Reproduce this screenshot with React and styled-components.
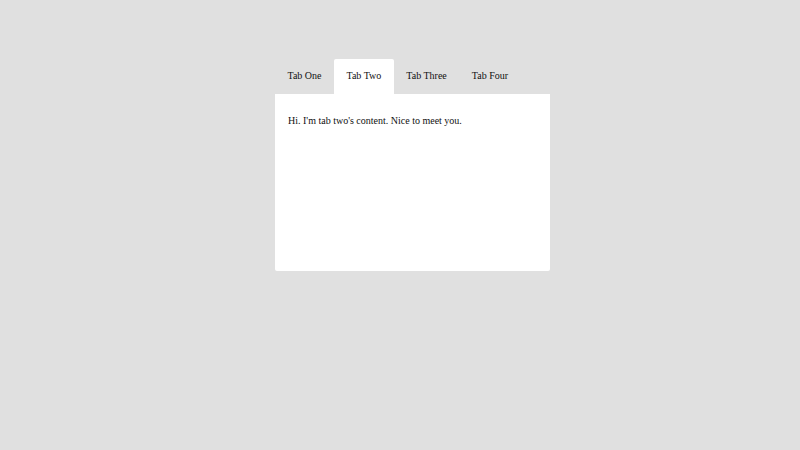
import React, { useState } from 'react'
import styled, { createGlobalStyle } from 'styled-components'

const GlobalStyle = createGlobalStyle`
  html, body {
    margin: 0;
    padding: 0;
    background: #e0e0e0;
    font-family: "Liberation Serif", "Times New Roman", serif;
    color: #111;
  }
`

const Page = styled.div`
  min-height: 450px;
  padding: 59px 0 0 275px;
  box-sizing: border-box;
`

const Tabs = styled.div`
  width: 275px;
`

const TabList = styled.div`
  display: flex;
`

const Tab = styled.button`
  flex: 0 0 auto;
  white-space: nowrap;
  border: none;
  margin: 0;
  height: 35px;
  padding: 0 12.5px 2px;
  font-family: inherit;
  font-size: 10px;
  color: #111;
  cursor: pointer;
  background: ${p => (p.$active ? '#fff' : 'transparent')};
  border-radius: 2px 2px 0 0;
`

const Panel = styled.div`
  background: #fff;
  height: 177px;
  box-sizing: border-box;
  padding: 21px 13px;
  border-radius: 0 0 2px 2px;
  font-size: 10px;
`

const Text = styled.p`
  margin: 0;
`

const tabs = [
  { label: 'Tab One', text: "Hi. I'm tab one's content. Nice to meet you." },
  { label: 'Tab Two', text: "Hi. I'm tab two's content. Nice to meet you." },
  { label: 'Tab Three', text: "Hi. I'm tab three's content. Nice to meet you." },
  { label: 'Tab Four', text: "Hi. I'm tab four's content. Nice to meet you." },
]

export default function App() {
  const [active, setActive] = useState(1)
  return (
    <>
      <GlobalStyle />
      <Page>
        <Tabs>
          <TabList>
            {tabs.map((t, i) => (
              <Tab key={t.label} $active={i === active} onClick={() => setActive(i)}>
                {t.label}
              </Tab>
            ))}
          </TabList>
          <Panel>
            <Text>{tabs[active].text}</Text>
          </Panel>
        </Tabs>
      </Page>
    </>
  )
}
